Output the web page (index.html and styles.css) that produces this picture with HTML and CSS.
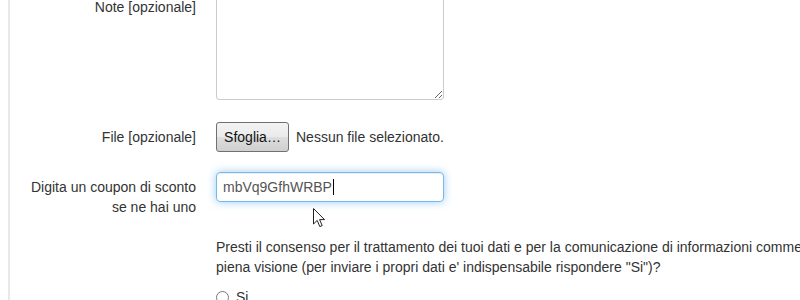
FILE: index.html
```html
<!DOCTYPE html>
<html lang="it">
  <head>
    <meta charset="UTF-8" />
    <meta name="viewport" content="width=device-width, initial-scale=1.0" />
    <title>Richiesta informazioni</title>
    <link rel="stylesheet" href="styles.css">
  </head>
  <body>
    <div class="page">
      <form class="form">
        <div class="group">
          <label class="label" for="note">Note [opzionale]</label>
          <div class="controls">
            <textarea id="note" class="textarea"></textarea>
          </div>
        </div>

        <div class="group">
          <label class="label">File [opzionale]</label>
          <div class="controls file-row">
            <button type="button" class="browse">Sfoglia…</button>
            <span class="file-name">Nessun file selezionato.</span>
          </div>
        </div>

        <div class="group">
          <label class="label">Digita un coupon di sconto se ne hai uno</label>
          <div class="controls">
            <div class="input is-focused">mbVq9GfhWRBP<span class="caret"></span></div>
          </div>
        </div>

        <div class="group">
          <div class="label"></div>
          <div class="controls">
            <p class="consent">Presti il consenso per il trattamento dei tuoi dati e per la comunicazione di informazioni commerciali di cui hai preso piena visione (per inviare i propri dati e' indispensabile rispondere "Si")?</p>
            <label class="radio"><input type="radio" name="consenso" value="si"> Si</label>
            <label class="radio"><input type="radio" name="consenso" value="no"> No</label>
          </div>
        </div>
      </form>

      <!-- mouse pointer -->
      <svg class="pointer" width="13" height="20" viewBox="0 0 13 20">
        <path d="M0.5 0.5 L0.5 16 L4.2 12.4 L6.8 18.6 L9.2 17.6 L6.6 11.6 L11.5 11.6 Z" fill="#fff" stroke="#222" stroke-width="1" stroke-linejoin="round" />
      </svg>
    </div>
  </body>
</html>
```

FILE: styles.css
```css
html,
body {
  margin: 0;
  height: 100%;
  overflow: hidden;
  background: #fff;
}
body {
  font-family: "Liberation Sans", Arial, sans-serif;
  font-size: 14px;
  line-height: 20px;
  color: #333;
}
.page {
  position: relative;
  margin-left: 8px;
  min-height: 100%;
  border-left: 2px solid #e8e8e8;
  padding-left: 16px;
}
.form {
  width: 920px;
  margin: -8px 0 0;
  display: flex;
  flex-direction: column;
  gap: 20px;
}
.group {
  display: grid;
  grid-template-columns: 170px 1fr;
  column-gap: 20px;
  align-items: start;
}
.label {
  padding-top: 5px;
  text-align: right;
}
.textarea {
  display: block;
  width: 228px;
  height: 108px;
  margin-bottom: 2px;
  box-sizing: border-box;
  border: 1px solid #ccc;
  border-radius: 3px;
  box-shadow: inset 0 1px 1px rgba(0, 0, 0, 0.075);
  font: inherit;
}
.file-row {
  display: flex;
  align-items: center;
  gap: 7px;
  height: 30px;
}
.browse {
  height: 30px;
  width: 73px;
  padding: 0;
  border: 1px solid #707070;
  border-radius: 3px;
  background: linear-gradient(#f3f3f3, #ebebeb 48%, #dddddd 52%, #cfcfcf);
  font: inherit;
  font-weight: normal;
  color: #111;
}
.file-name {
  color: #333;
}
.input {
  width: 228px;
  height: 30px;
  box-sizing: border-box;
  padding: 4px 6px;
  border: 1px solid #ccc;
  border-radius: 4px;
  color: #555;
}
.input.is-focused {
  border-color: rgba(82, 168, 236, 0.8);
  box-shadow: inset 0 1px 1px rgba(0, 0, 0, 0.075), 0 0 8px rgba(82, 168, 236, 0.6);
}
.caret {
  display: inline-block;
  width: 1px;
  height: 16px;
  margin-left: 1px;
  vertical-align: -3px;
  background: #000;
}
.consent {
  margin: 0 0 10px;
}
.radio {
  display: block;
  min-height: 20px;
  padding-left: 20px;
}
.radio input {
  float: left;
  margin: 4px 0 0 -20px;
}
.pointer {
  position: absolute;
  left: 303px;
  top: 216px;
}
```
